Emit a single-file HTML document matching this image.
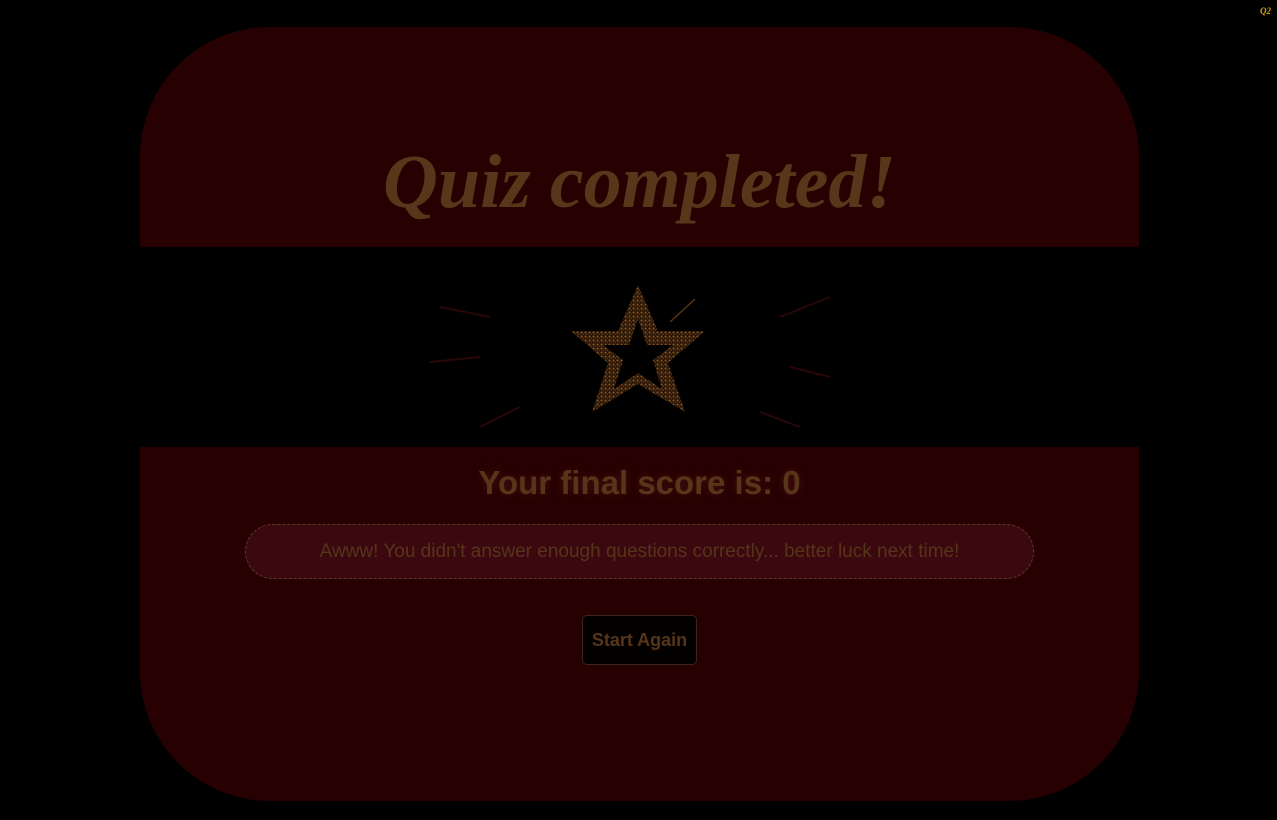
<!DOCTYPE html>
<html><head><style>
html,body{margin:0;padding:0;background:#000;width:1277px;height:820px;overflow:hidden;font-family:"Liberation Sans",sans-serif}
.q2{position:absolute;right:6px;top:6px;color:#d9a400;font:italic bold 9px "Liberation Serif",serif}
.card{position:absolute;left:140px;top:27px;width:999px;height:774px;background:#270002;border-radius:130px;overflow:hidden}
h1{position:absolute;left:0;right:0;top:112px;margin:0;text-align:center;color:#593519;font:italic bold 76px "Liberation Serif",serif;letter-spacing:0px}
.band{position:absolute;left:0;top:220px;width:999px;height:200px;background:#010000}
.score{position:absolute;left:0;right:0;top:437px;text-align:center;color:#573519;font-size:33px;font-weight:bold;text-shadow:0 0 8px #4a1010}
.msg{position:absolute;left:105px;top:497px;width:787px;height:53px;border:1px dashed #5a3a20;border-radius:28px;background:#3c0810;color:#553519;font-size:19px;line-height:53px;text-align:center}
.btn{position:absolute;left:442px;top:588px;width:113px;height:48px;border:1px solid #3a2518;border-radius:5px;background:#030000;color:#573519;font-weight:bold;font-size:18px;line-height:48px;text-align:center}
</style></head><body>
<div class="q2">Q2</div>
<div class="card">
<h1>Quiz completed!</h1>
<div class="band">
<svg width="999" height="200" viewBox="0 0 999 200">
<defs><pattern id="dots" width="4" height="4" patternUnits="userSpaceOnUse"><rect width="4" height="4" fill="#2a1505"/><circle cx="1.5" cy="1.5" r="1" fill="#8a5a20"/><circle cx="3.2" cy="3.2" r="0.7" fill="#6a4018"/></pattern></defs>
<g stroke="#2a0606" stroke-width="2">
<line x1="350" y1="70" x2="300" y2="60"/><line x1="340" y1="110" x2="290" y2="115"/><line x1="640" y1="70" x2="690" y2="50"/><line x1="650" y1="120" x2="690" y2="130"/><line x1="620" y1="165" x2="660" y2="180"/><line x1="380" y1="160" x2="340" y2="180"/>
</g>
<line x1="530" y1="75" x2="555" y2="52" stroke="#5a3510" stroke-width="1.5"/>
<path fill-rule="evenodd" fill="url(#dots)" d="M498 38 L518 84 L565 84 L528 116 L545 165 L498 137 L452 165 L468 116 L431 84 L478 84 Z M498 72 L507 98 L533 98 L513 113 L522 142 L498 126 L474 142 L483 113 L463 98 L489 98 Z"/>
</svg>
</div>
<div class="score">Your final score is: 0</div>
<div class="msg">Awww! You didn't answer enough questions correctly... better luck next time!</div>
<div class="btn">Start Again</div>
</div>
</body></html>
